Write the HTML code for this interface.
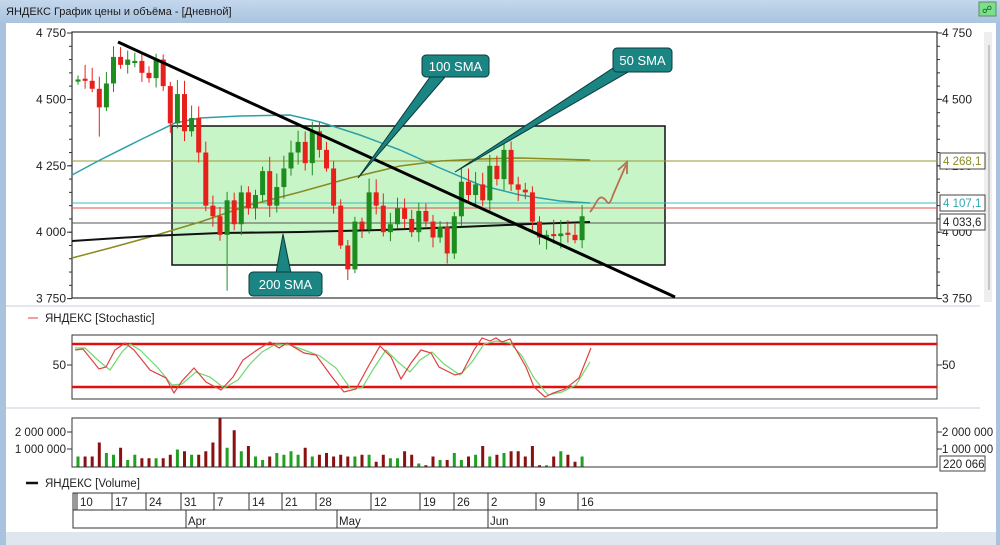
<!DOCTYPE html>
<html><head><meta charset="utf-8"><style>
html,body{margin:0;padding:0;width:1000px;height:545px;overflow:hidden;background:#a9c2dd;font-family:"Liberation Sans",sans-serif}
svg{display:block}
</style></head><body>
<svg id="s" width="1000" height="545" xmlns="http://www.w3.org/2000/svg" font-family="Liberation Sans, sans-serif">
<defs><linearGradient id="tb" x1="0" y1="0" x2="0" y2="1"><stop offset="0" stop-color="#c4d7ec"/><stop offset="1" stop-color="#aac4df"/></linearGradient></defs>
<rect x="0" y="0" width="1000" height="545" fill="#a9c2dd"/>
<rect x="0" y="0" width="1000" height="23" fill="url(#tb)"/>
<text x="6" y="15" font-size="11" fill="#1a1a1a">ЯНДЕКС График цены и объёма - [Дневной]</text>
<rect x="979" y="2" width="17" height="14" fill="#7be08a" stroke="#5a8a6a"/>
<text x="982" y="13" font-size="10" fill="#1a5a1a">&#x260D;</text>
<rect x="6" y="23" width="990" height="510" fill="#ffffff"/>
<rect x="6" y="532" width="990" height="13" fill="#dfe6ee"/>
<rect x="984" y="32" width="8" height="270" fill="#eeeeee"/>
<line x1="989" y1="45" x2="989" y2="290" stroke="#999"/>
<line x1="6" y1="306" x2="980" y2="306" stroke="#ccd"/>
<line x1="6" y1="408" x2="980" y2="408" stroke="#ccd"/>
<g id="main"></g>
</svg>
<script>
var S=document.getElementById('s'),NS='http://www.w3.org/2000/svg',G=document.getElementById('main');
function el(t,a,txt){var e=document.createElementNS(NS,t);for(var k in a)e.setAttribute(k,a[k]);if(txt!=null)e.textContent=txt;G.appendChild(e);return e;}
function Y(p){return 33+(4750-p)*0.2656;}
// main box
el('rect',{x:72,y:32,width:865,height:266,fill:'#fff',stroke:'#333','stroke-width':1.2});
[[4750,'4 750'],[4500,'4 500'],[4250,'4 250'],[4000,'4 000'],[3750,'3 750']].forEach(function(a){var y=Y(a[0]);
el('text',{x:66,y:y+4,'font-size':12,'text-anchor':'end',fill:'#222'},a[1]);el('line',{x1:67,y1:y,x2:72,y2:y,stroke:'#333'});
el('text',{x:942,y:y+4,'font-size':12,fill:'#222'},a[1]);el('line',{x1:937,y1:y,x2:942,y2:y,stroke:'#333'});});
for(var p=3750;p<=4750;p+=50){var y=Y(p);el('line',{x1:69,y1:y,x2:72,y2:y,stroke:'#333'});el('line',{x1:937,y1:y,x2:940,y2:y,stroke:'#333'});}
el('rect',{x:172,y:126,width:493,height:139,fill:'#c8f5c8',stroke:'#111','stroke-width':1.5});
el('line',{x1:72,y1:161,x2:937,y2:161,stroke:'#9a9a30','stroke-width':1});
el('line',{x1:72,y1:203,x2:937,y2:203,stroke:'#40b8c0','stroke-width':1});
el('line',{x1:72,y1:208,x2:937,y2:208,stroke:'#e05050','stroke-width':1});
el('line',{x1:72,y1:223,x2:937,y2:223,stroke:'#555','stroke-width':1});
// SMAs
el('polyline',{points:'72,175 100,160 140,140 175,123 200,118 240,116 290,115 320,122 360,135 400,150 440,168 480,185 520,195 560,201 590,203',fill:'none',stroke:'#2aa0a8','stroke-width':1.5});
el('polyline',{points:'72,258 110,248 150,237 200,222 250,205 300,192 350,178 400,166 440,161 480,159 520,158 590,160',fill:'none',stroke:'#8a8a20','stroke-width':1.5});
el('polyline',{points:'72,241 150,236 220,233 300,232 380,230 460,227 530,224 590,222',fill:'none',stroke:'#111','stroke-width':2});
// candles
var C=[4575,4570,4540,4470,4560,4660,4630,4650,4645,4600,4580,4650,4550,4410,4520,4380,4430,4300,4100,4060,3990,4120,4030,4150,4090,4140,4230,4100,4170,4240,4300,4340,4260,4380,4310,4240,4100,3950,3860,4040,4010,4150,4100,4000,4030,4090,4050,4000,4080,4040,3980,4020,3920,4060,4190,4140,4180,4120,4250,4200,4310,4180,4160,4150,4040,3980,3990,3985,3995,3990,3970,4060];
var V=[6,6,6,14,8,7,11,4,7,5,5,5,5,7,10,9,7,7,9,14,28,11,21,9,12,6,4,6,8,7,9,7,11,6,7,8,6,7,6,6,7,7,3,7,5,5,9,7,2,1,6,4,4,8,4,6,7,12,6,7,8,9,9,6,12,1,1,6,9,7,3,6];
var prev=4570;
for(var i=0;i<C.length;i++){var x=78+7.1*i,o=prev,c=C[i];if(Math.abs(o-c)<6)o=c+(i%2?8:-8);
var up=c>o,hi=Math.max(o,c)+15+(i*37%40),lo=Math.min(o,c)-12-(i*53%35);if(i==21)lo=3780;if(i==38)lo=3820;if(i==3)lo=4360;
var col=up?'#1e8c1e':'#e8201c';
el('line',{x1:x,y1:Y(hi),x2:x,y2:Y(lo),stroke:col,'stroke-width':1});
var t=Y(Math.max(o,c)),b=Y(Math.min(o,c));el('rect',{x:x-2.5,y:t,width:5,height:Math.max(1.5,b-t),fill:col});
var vh=V[i]*1.75;el('rect',{x:x-1.5,y:467-vh,width:3,height:vh,fill:up?'#22a022':'#8b1010'});
prev=c;}
// trend line
el('line',{x1:118,y1:42,x2:675,y2:297,stroke:'#000','stroke-width':3});
// arrow
el('path',{d:'M590,212 C596,205 598,195 603,198 C608,200 608,210 613,195 L626,165',fill:'none',stroke:'#b87050','stroke-width':1.8});
el('path',{d:'M618,170 L627,162 L627,174',fill:'none',stroke:'#b87050','stroke-width':1.8});
// callouts
el('polygon',{points:'430,77 445,77 358,178',fill:'#1b8584',stroke:'#0a3a3a','stroke-width':1});
el('rect',{x:422,y:55,width:67,height:22,rx:4,fill:'#1b8584',stroke:'#0a3a3a'});
el('text',{x:455.5,y:71,'font-size':13,'text-anchor':'middle',fill:'#fff'},'100 SMA');
el('polygon',{points:'613,68 628,72 455,172',fill:'#1b8584',stroke:'#0a3a3a','stroke-width':1});
el('rect',{x:613,y:48,width:59,height:24,rx:4,fill:'#1b8584',stroke:'#0a3a3a'});
el('text',{x:642.5,y:65,'font-size':13,'text-anchor':'middle',fill:'#fff'},'50 SMA');
el('polygon',{points:'276,273 291,273 283,234',fill:'#1b8584',stroke:'#0a3a3a','stroke-width':1});
el('rect',{x:249,y:272,width:73,height:24,rx:4,fill:'#1b8584',stroke:'#0a3a3a'});
el('text',{x:285.5,y:289,'font-size':13,'text-anchor':'middle',fill:'#fff'},'200 SMA');
// right labels
[[153,'4 268,1','#8a8a20'],[195,'4 107,1','#30a8b0'],[214,'4 033,6','#222']].forEach(function(a){
el('rect',{x:940,y:a[0],width:45,height:16,fill:'#fff',stroke:'#444'});el('text',{x:943,y:a[0]+12,'font-size':11.5,fill:a[2]},a[1]);});
// stochastic
el('line',{x1:28,y1:318,x2:38,y2:318,stroke:'#e04040'});
el('text',{x:45,y:322,'font-size':11.5,fill:'#222'},'ЯНДЕКС [Stochastic]');
el('rect',{x:72,y:335,width:865,height:64,fill:'#fff',stroke:'#333'});
el('line',{x1:72,y1:344,x2:937,y2:344,stroke:'#e01010','stroke-width':2.5});
el('line',{x1:72,y1:387,x2:937,y2:387,stroke:'#e01010','stroke-width':2.5});
el('text',{x:66,y:369,'font-size':12,'text-anchor':'end',fill:'#222'},'50');
el('text',{x:942,y:369,'font-size':12,fill:'#222'},'50');
el('line',{x1:67,y1:365,x2:72,y2:365,stroke:'#333'});el('line',{x1:937,y1:365,x2:942,y2:365,stroke:'#333'});
var R='75,350 83,349 99,369 106,367 115,350 125,343 134,350 150,370 166,378 174,393 182,381 194,368 206,382 221,390 233,377 243,360 257,350 270,342 279,348 287,343 304,353 316,355 332,377 344,392 356,389 368,367 380,346 391,357 401,379 411,363 421,350 431,353 439,367 455,375 462,373 474,350 482,338 490,341 496,338 502,342 510,339 518,353 526,367 534,387 545,397 553,393 565,389 579,378 591,348';
var Gp='75,348 85,348 100,362 110,370 122,352 130,344 140,350 158,368 172,385 182,384 196,372 210,377 224,388 238,380 250,364 262,352 276,344 290,345 304,350 320,356 336,368 350,388 362,388 374,368 386,350 398,362 410,372 420,360 432,352 444,364 460,375 472,362 484,344 496,341 510,343 522,356 534,378 548,395 562,392 576,385 590,362';
el('polyline',{points:Gp,fill:'none',stroke:'#70d870','stroke-width':1.2});
el('polyline',{points:R,fill:'none',stroke:'#e04040','stroke-width':1.2});
// volume panel
el('rect',{x:72,y:418,width:865,height:49,fill:'none',stroke:'#333'});
[[432,'2 000 000'],[449,'1 000 000']].forEach(function(a){el('text',{x:66,y:a[0]+4,'font-size':11.5,'text-anchor':'end',fill:'#222'},a[1]);el('line',{x1:67,y1:a[0],x2:72,y2:a[0],stroke:'#333'});
el('text',{x:942,y:a[0]+4,'font-size':11.5,fill:'#222'},a[1]);el('line',{x1:937,y1:a[0],x2:942,y2:a[0],stroke:'#333'});});
el('rect',{x:940,y:456,width:45,height:15,fill:'#fff',stroke:'#444'});
el('text',{x:943,y:468,'font-size':11.5,fill:'#222'},'220 066');
el('line',{x1:26,y1:483,x2:38,y2:483,stroke:'#111','stroke-width':2.5});
el('text',{x:45,y:487,'font-size':11.5,fill:'#222'},'ЯНДЕКС [Volume]');
// date axis
el('rect',{x:73,y:493,width:864,height:35,fill:'#fff',stroke:'#333'});
el('line',{x1:73,y1:510,x2:937,y2:510,stroke:'#333'});
el('line',{x1:75,y1:493,x2:75,y2:510,stroke:'#333'});
[[77,'10'],[112,'17'],[146,'24'],[181,'31'],[214,'7'],[249,'14'],[282,'21'],[316,'28'],[371,'12'],[420,'19'],[454,'26'],[488,'2'],[536,'9'],[578,'16']].forEach(function(a){
el('line',{x1:a[0],y1:493,x2:a[0],y2:510,stroke:'#333'});el('text',{x:a[0]+3,y:506,'font-size':11.5,fill:'#222'},a[1]);});
[[186,'Apr'],[337,'May'],[488,'Jun']].forEach(function(a){el('line',{x1:a[0],y1:510,x2:a[0],y2:528,stroke:'#333'});el('text',{x:a[0]+2,y:525,'font-size':11.5,fill:'#222'},a[1]);});
</script>
</body></html>
